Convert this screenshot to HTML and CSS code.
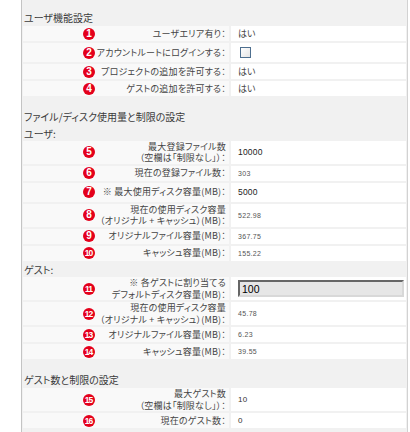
FILE: index.html
```html
<!DOCTYPE html>
<html lang="ja">
<head>
  <meta charset="UTF-8" />
  <meta name="viewport" content="width=device-width, initial-scale=1.0" />
  <title>ユーザ設定</title>
  <link rel="stylesheet" href="styles.css">
</head>
<body>
  <div class="panel">

    <section class="section">
      <h2>ユーザ機能設定</h2>
      <div class="row">
        <div class="label"><span class="badge">1</span><span class="text">ユーザエリア有り：</span></div>
        <div class="value">はい</div>
      </div>
      <div class="row tall">
        <div class="label"><span class="badge">2</span><span class="text">アカウントルートにログインする：</span></div>
        <div class="value"><span class="check"></span></div>
      </div>
      <div class="row">
        <div class="label"><span class="badge">3</span><span class="text">プロジェクトの追加を許可する：</span></div>
        <div class="value">はい</div>
      </div>
      <div class="row">
        <div class="label"><span class="badge">4</span><span class="text">ゲストの追加を許可する：</span></div>
        <div class="value">はい</div>
      </div>
    </section>

    <section class="section">
      <h2>ファイル/ディスク使用量と制限の設定</h2>
      <h3>ユーザ:</h3>
      <div class="row">
        <div class="label"><span class="badge">5</span><span class="text">最大登録ファイル数<br>（空欄は「制限なし」）：</span></div>
        <div class="value"><span class="num big">10000</span></div>
      </div>
      <div class="row">
        <div class="label"><span class="badge">6</span><span class="text">現在の登録ファイル数：</span></div>
        <div class="value"><span class="num">303</span></div>
      </div>
      <div class="row tall">
        <div class="label"><span class="badge">7</span><span class="text">※ 最大使用ディスク容量(MB)：</span></div>
        <div class="value"><span class="num big">5000</span></div>
      </div>
      <div class="row">
        <div class="label"><span class="badge">8</span><span class="text">現在の使用ディスク容量<br>（オリジナル + キャッシュ）(MB)：</span></div>
        <div class="value"><span class="num">522.98</span></div>
      </div>
      <div class="row">
        <div class="label"><span class="badge">9</span><span class="text">オリジナルファイル容量(MB)：</span></div>
        <div class="value"><span class="num">367.75</span></div>
      </div>
      <div class="row">
        <div class="label"><span class="badge two">10</span><span class="text">キャッシュ容量(MB)：</span></div>
        <div class="value"><span class="num">155.22</span></div>
      </div>

      <h3>ゲスト:</h3>
      <div class="row">
        <div class="label"><span class="badge two">11</span><span class="text">※ 各ゲストに割り当てる<br>デフォルトディスク容量(MB)：</span></div>
        <div class="value"><input class="field" type="text" value="100"></div>
      </div>
      <div class="row">
        <div class="label"><span class="badge two">12</span><span class="text">現在の使用ディスク容量<br>（オリジナル + キャッシュ）(MB)：</span></div>
        <div class="value"><span class="num">45.78</span></div>
      </div>
      <div class="row">
        <div class="label"><span class="badge two">13</span><span class="text">オリジナルファイル容量(MB)：</span></div>
        <div class="value"><span class="num">6.23</span></div>
      </div>
      <div class="row">
        <div class="label"><span class="badge two">14</span><span class="text">キャッシュ容量(MB)：</span></div>
        <div class="value"><span class="num">39.55</span></div>
      </div>
    </section>

    <section class="section">
      <h2>ゲスト数と制限の設定</h2>
      <div class="row">
        <div class="label"><span class="badge two">15</span><span class="text">最大ゲスト数<br>（空欄は「制限なし」）：</span></div>
        <div class="value"><span class="num mid">10</span></div>
      </div>
      <div class="row">
        <div class="label"><span class="badge two">16</span><span class="text">現在のゲスト数：</span></div>
        <div class="value"><span class="num mid">0</span></div>
      </div>
    </section>

  </div>
</body>
</html>
```

FILE: styles.css
```css
*, *::before, *::after { box-sizing: border-box; }

body {
  margin: 0;
  background-color: #ffffff;
  font-family: "Noto Sans CJK JP", "Noto Sans", sans-serif;
  font-feature-settings: "palt";
  color: #444;
}

.panel {
  margin-left: 21px;
  width: 387px;
  min-height: 100vh;
  background-color: #f1f1f1;
  border-left: 1px solid #c4c4c4;
  border-right: 1px solid #d2d2d2;
  padding: 0 1px;
}

.section { padding-top: 11px; }
.section:first-child { padding-top: 10px; }

h2 {
  margin: 0 0 1px;
  padding-left: 1px;
  font-size: 10px;
  font-weight: normal;
  line-height: 15px;
  color: #3a3a3a;
}

h3 {
  margin: 3.5px 0 1px;
  padding-left: 1px;
  font-size: 10px;
  font-weight: normal;
  line-height: 12px;
  color: #3a3a3a;
}

.row {
  display: grid;
  grid-template-columns: 206px 175px;
  column-gap: 2px;
  min-height: 15px;
  margin-bottom: 2px;
}

.row.tall { min-height: 19px; }

.label {
  display: flex;
  align-items: center;
  padding: 0 3px 0 60px;
  background-color: #f9f9f9;
  font-size: 9px;
  line-height: 11.5px;
}

.label .text {
  flex: 1;
  text-align: right;
  letter-spacing: 0.2px;
}

.badge {
  flex-shrink: 0;
  width: 12px;
  height: 12px;
  border-radius: 50%;
  background-color: #e4001b;
  color: #fff;
  font-family: "Liberation Sans", sans-serif;
  font-weight: bold;
  font-size: 10px;
  line-height: 12px;
  display: flex;
  align-items: center;
  justify-content: center;
}

.badge.two {
  font-size: 8.5px;
  letter-spacing: -0.9px;
  padding-right: 1px;
}

.value {
  display: flex;
  align-items: center;
  padding-left: 7px;
  background-color: #ffffff;
  font-size: 9px;
}

.num {
  font-family: "Liberation Sans", sans-serif;
  font-size: 7px;
  letter-spacing: 0.3px;
  color: #555;
}

.num.big {
  font-size: 8.5px;
  letter-spacing: 0.2px;
  color: #222;
}

.num.mid {
  font-size: 8px;
  color: #333;
}

.check {
  width: 11px;
  height: 11px;
  margin-left: 2px;
  border: 1px solid #4e6f8f;
  background: linear-gradient(135deg, #ffffff 0%, #e4e4e4 100%);
}

.field {
  width: 166px;
  height: 17px;
  margin: 0;
  padding: 0 2px;
  border: 2px solid;
  border-color: #666 #d8d8d8 #d8d8d8 #666;
  background-color: #e6e6e6;
  font-family: "Liberation Sans", sans-serif;
  font-size: 10.5px;
  color: #000;
}
```
